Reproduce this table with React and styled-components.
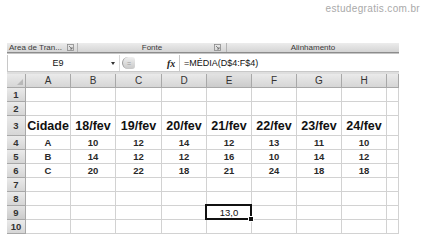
import React from "react";
import styled, { createGlobalStyle, css } from "styled-components";

const GlobalStyle = createGlobalStyle`
  html, body { margin: 0; padding: 0; background: #ffffff; }
  body { font-family: "Liberation Sans", Arial, sans-serif; width: 424px; height: 250px; overflow: hidden; }
`;

const Page = styled.div`
  width: 424px;
  height: 250px;
  display: flex;
  flex-direction: column;
`;

const Watermark = styled.div`
  height: 43px;
  display: flex;
  justify-content: flex-end;
  align-items: flex-start;
  padding: 3px 4px 0 0;
  box-sizing: border-box;
  font-size: 10px;
  letter-spacing: 0.35px;
  color: #a9a9a9;
`;

const Sheet = styled.div`
  margin-left: 7px;
  width: 392px;
  display: flex;
  flex-direction: column;
`;

const Ribbon = styled.div`
  height: 9px;
  display: flex;
  background: linear-gradient(#ececec, #d4d4d4);
  border-bottom: 1px solid #8c8c8c;
  box-shadow: 0 1px 0 #c4c4c4;
  font-size: 8px;
  color: #3a3a3a;
  line-height: 9px;
`;

const Group = styled.div`
  width: ${(p) => p.$w}px;
  flex: none;
  display: flex;
  align-items: center;
  justify-content: ${(p) => (p.$left ? "flex-start" : "center")};
  padding-left: ${(p) => (p.$left ? "2px" : "0")};
  box-sizing: border-box;
  position: relative;
  border-right: ${(p) => (p.$last ? "none" : "1px solid #b4b4b4")};
  white-space: nowrap;
`;

const Launcher = styled.svg`
  position: absolute;
  right: ${(p) => p.$r}px;
  top: 1px;
`;

const FormulaBar = styled.div`
  margin-top: 2px;
  height: 16px;
  display: flex;
  align-items: center;
  background: #ffffff;
  border-left: 1px solid #c8c8c8;
  font-size: 9px;
  color: #222;
`;

const NameBox = styled.div`
  width: 112px;
  height: 16px;
  flex: none;
  display: flex;
  align-items: center;
  box-sizing: border-box;
  position: relative;
  border-right: 1px solid #dadada;
`;

const NameText = styled.span`
  width: 100px;
  text-align: center;
  font-size: 9px;
  color: #111;
`;

const DropArrow = styled.span`
  width: 0;
  height: 0;
  border-left: 2.5px solid transparent;
  border-right: 2.5px solid transparent;
  border-top: 3px solid #333;
  margin-left: 3px;
`;

const Pill = styled.div`
  width: 12px;
  height: 12px;
  margin-left: 2px;
  border-radius: 6px 3px 3px 6px;
  background: linear-gradient(#f0f0f0, #c8c8c8);
  border-left: 1px solid #9a9a9a;
  display: flex;
  align-items: center;
  justify-content: center;
  font-size: 7px;
  color: #9a9a9a;
  flex: none;
`;

const Fx = styled.span`
  margin-left: 32px;
  width: 10px;
  font-family: "Liberation Serif", serif;
  font-style: italic;
  font-weight: 700;
  font-size: 10px;
  color: #222;
  flex: none;
`;

const FxDivider = styled.div`
  width: 1px;
  height: 16px;
  background: #c8c8c8;
  margin: 0 4px 0 2px;
  flex: none;
`;

const FormulaText = styled.span`
  font-size: 9px;
  color: #111;
  white-space: nowrap;
`;

const Band = styled.div`
  height: 3px;
  background: #dedede;
  border-top: 1px solid #c8c8c8;
  box-sizing: border-box;
`;

const Grid = styled.div`
  display: grid;
  grid-template-columns: 19px 45px 45px 46px 45px 45px 45px 45px 45px 12px;
  grid-template-rows: 14px 14px 14px 20px repeat(7, 14px);
`;

const headerBase = css`
  background: linear-gradient(#eaeaea, #d6d6d6);
  border-right: 1px solid #a8a8a8;
  border-bottom: 1px solid #a8a8a8;
  color: #333;
`;

const Cell = styled.div`
  box-sizing: border-box;
  display: flex;
  align-items: center;
  justify-content: center;
  border-right: 1px solid #d2d2d2;
  border-bottom: 1px solid #d2d2d2;
  font-size: ${(p) => (p.$big ? "12.5px" : "9.5px")};
  font-weight: 700;
  color: ${(p) => (p.$big ? "#111" : "#2a2a2a")};
  position: relative;
  white-space: nowrap;
  ${(p) =>
    p.$selected &&
    css`
      font-weight: 400;
      color: #111;
      &::after {
        content: "";
        position: absolute;
        left: -2px;
        top: -2px;
        right: -1px;
        bottom: -1px;
        border: 2px solid #111;
      }
      &::before {
        content: "";
        position: absolute;
        right: -3px;
        bottom: -3px;
        width: 4px;
        height: 4px;
        background: #111;
        border: 1px solid #fff;
        z-index: 2;
      }
    `}
`;

const ColHead = styled.div`
  ${headerBase};
  box-sizing: border-box;
  display: flex;
  align-items: center;
  justify-content: center;
  font-size: 10px;
  ${(p) => p.$active && css`background: linear-gradient(#e2e2e2, #cbcbcb);`}
`;

const RowHead = styled.div`
  ${headerBase};
  box-sizing: border-box;
  display: flex;
  align-items: center;
  justify-content: center;
  font-size: 9.5px;
  font-weight: 700;
  ${(p) => p.$active && css`background: linear-gradient(#e2e2e2, #cbcbcb);`}
`;

const Corner = styled.div`
  ${headerBase};
  position: relative;
  &::after {
    content: "";
    position: absolute;
    right: 2px;
    bottom: 2px;
    width: 0;
    height: 0;
    border-left: 6px solid transparent;
    border-bottom: 6px solid #b8b8b8;
  }
`;

const cols = ["A", "B", "C", "D", "E", "F", "G", "H", ""];

const rows = {
  3: ["Cidade", "18/fev", "19/fev", "20/fev", "21/fev", "22/fev", "23/fev", "24/fev", ""],
  4: ["A", "10", "12", "14", "12", "13", "11", "10", ""],
  5: ["B", "14", "12", "12", "16", "10", "14", "12", ""],
  6: ["C", "20", "22", "18", "21", "24", "18", "18", ""],
  9: ["", "", "", "", "13,0", "", "", "", ""],
};

function LauncherIcon({ r }) {
  return (
    <Launcher $r={r} width="7" height="7" viewBox="0 0 7 7">
      <rect x="0.5" y="0.5" width="6" height="6" fill="none" stroke="#8a8a8a" strokeWidth="0.8" />
      <path d="M2 2 L5 5 M5 3 L5 5 L3 5" fill="none" stroke="#6a6a6a" strokeWidth="0.8" />
    </Launcher>
  );
}

export default function App() {
  const rowNums = [1, 2, 3, 4, 5, 6, 7, 8, 9, 10];
  return (
    <Page>
      <GlobalStyle />
      <Watermark>estudegratis.com.br</Watermark>
      <Sheet>
        <Ribbon>
          <Group $w={71} $left>
            Area de Tran...
            <LauncherIcon r={3} />
          </Group>
          <Group $w={149}>
            Fonte
            <LauncherIcon r={5} />
          </Group>
          <Group $w={172} $last>
            Alinhamento
          </Group>
        </Ribbon>
        <FormulaBar>
          <NameBox>
            <NameText>E9</NameText>
            <DropArrow />
          </NameBox>
          <Pill>=</Pill>
          <Fx>fx</Fx>
          <FxDivider />
          <FormulaText>=MÉDIA(D$4:F$4)</FormulaText>
        </FormulaBar>
        <Band />
        <Grid>
          <Corner />
          {cols.map((c, i) => (
            <ColHead key={"h" + i} $active={c === "E"}>
              {c}
            </ColHead>
          ))}
          {rowNums.map((n) => (
            <React.Fragment key={n}>
              <RowHead $active={n === 9}>{n}</RowHead>
              {cols.map((c, i) => {
                const v = rows[n] ? rows[n][i] : "";
                return (
                  <Cell key={i} $big={n === 3} $selected={n === 9 && c === "E"}>
                    {v}
                  </Cell>
                );
              })}
            </React.Fragment>
          ))}
        </Grid>
      </Sheet>
    </Page>
  );
}
